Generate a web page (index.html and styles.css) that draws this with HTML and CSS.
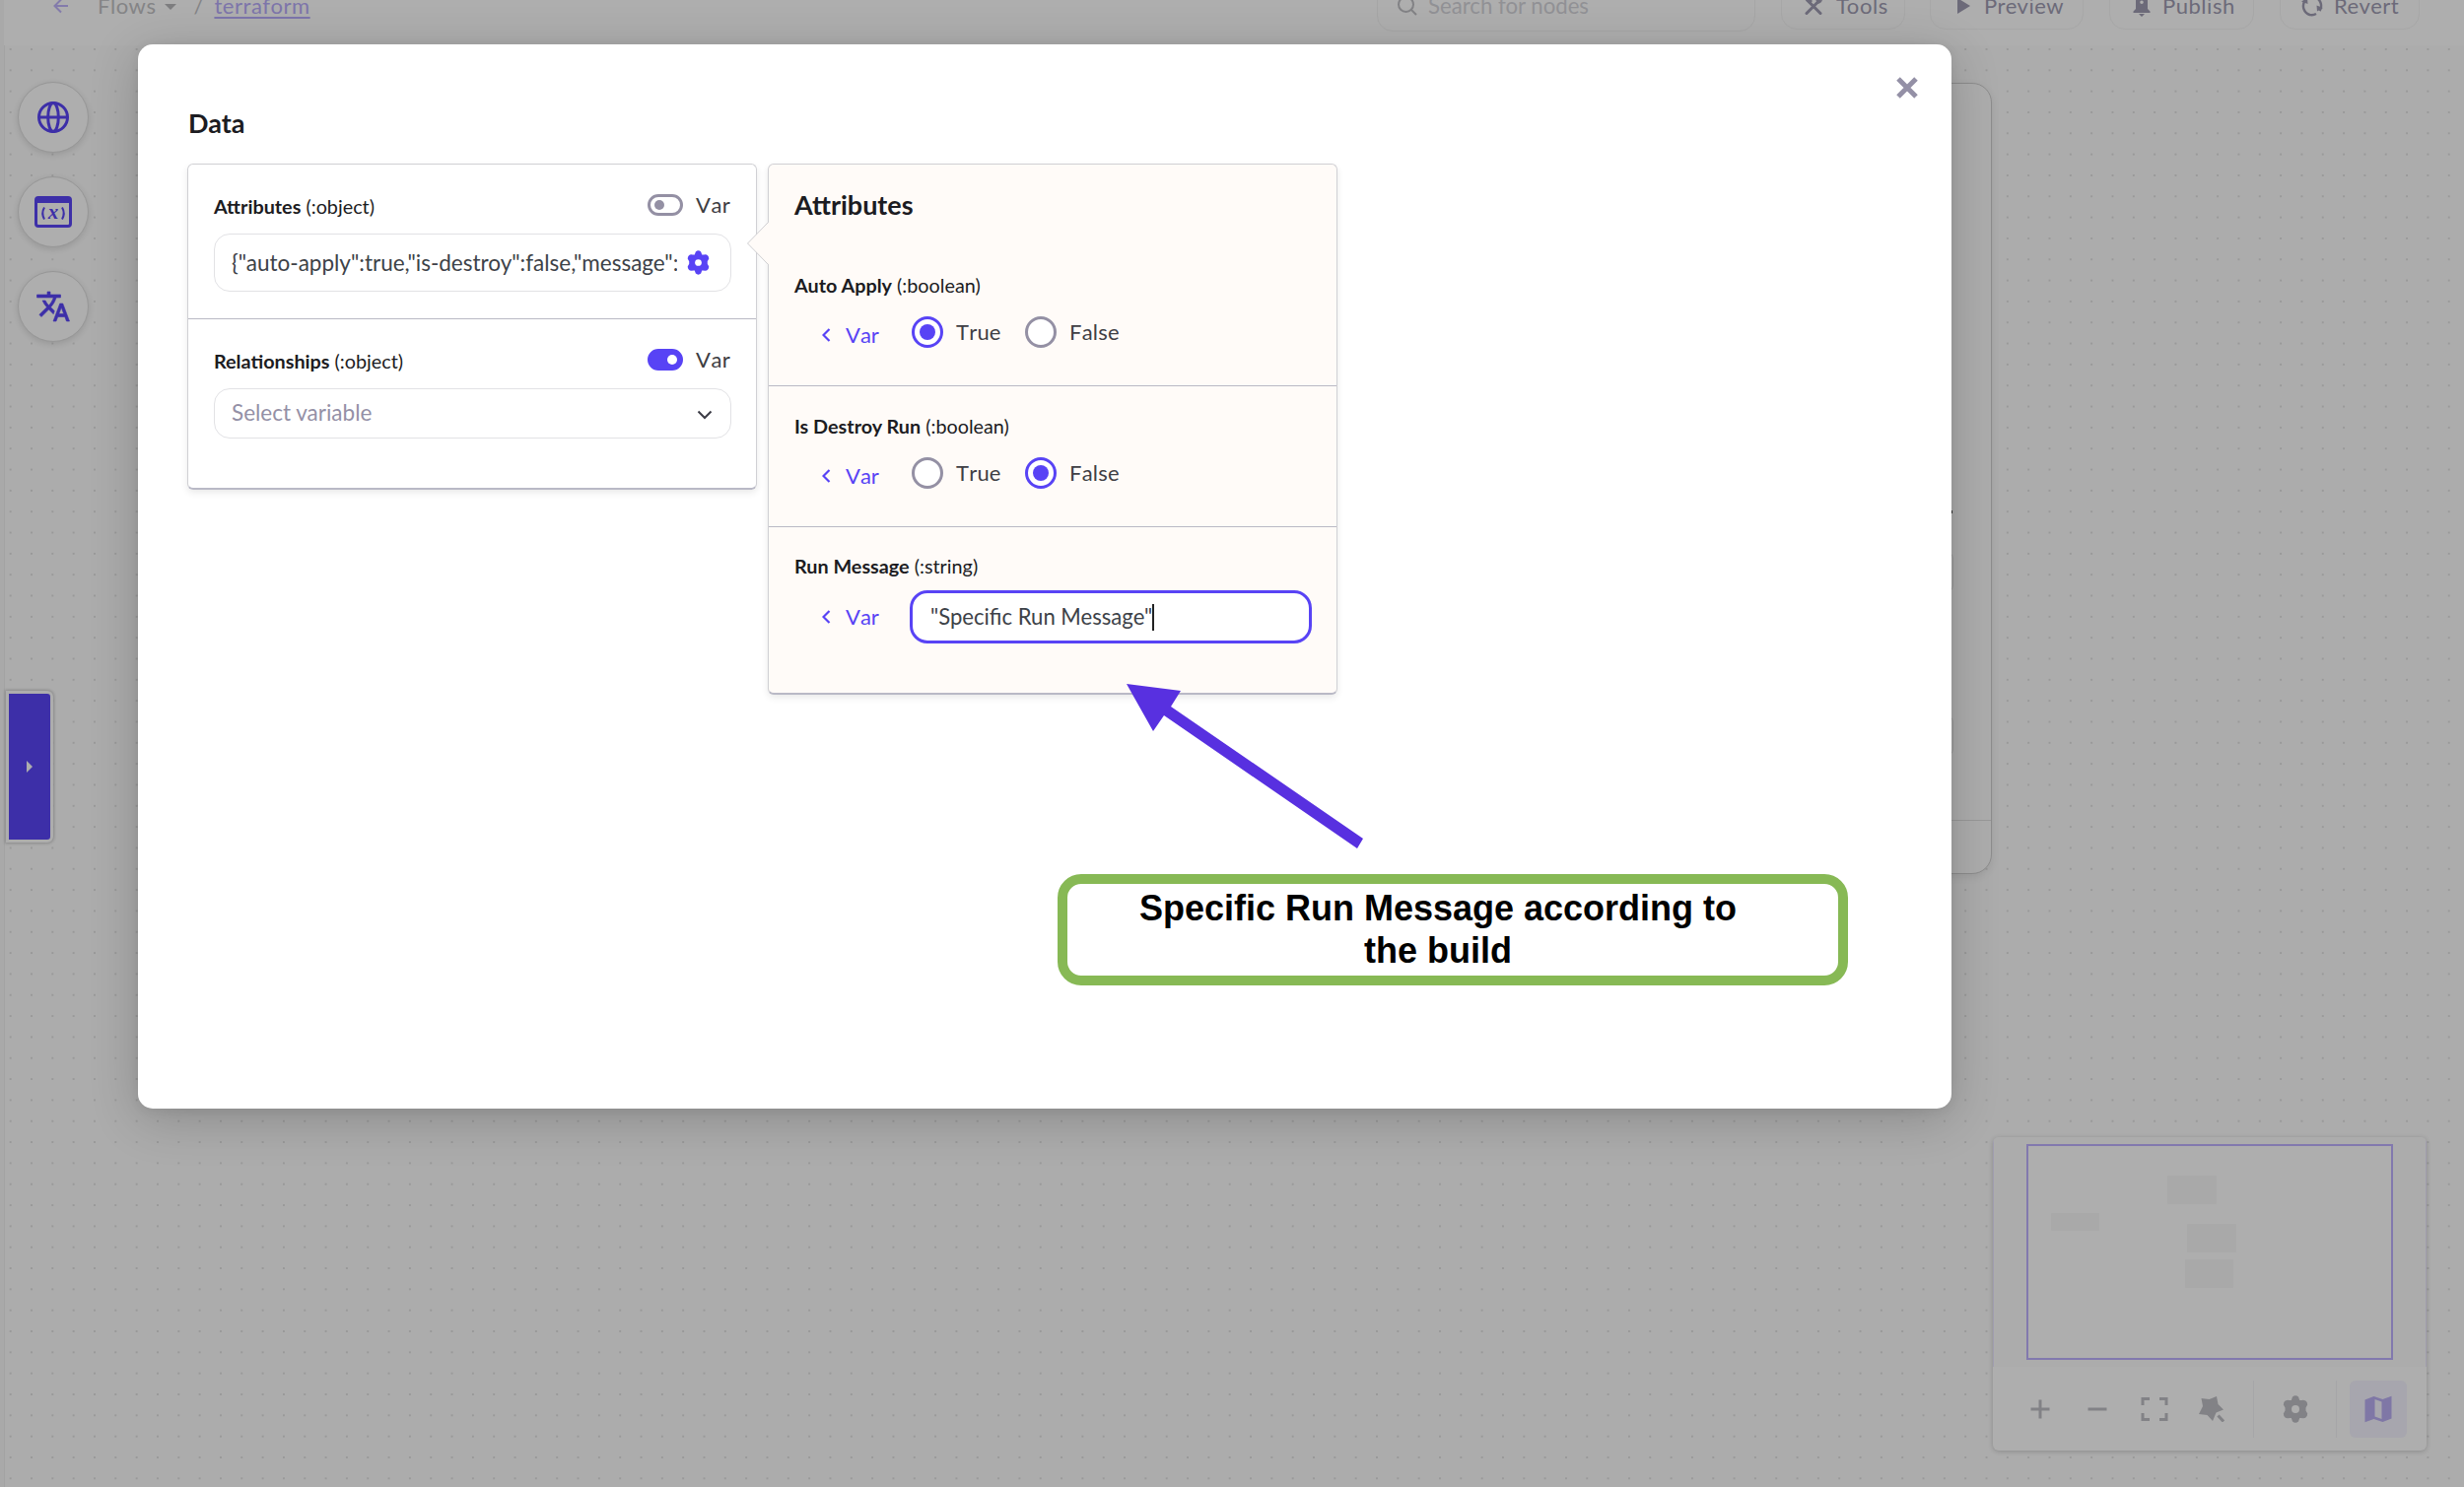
FILE: index.html
```html
<!DOCTYPE html>
<html lang="en">
<head>
<meta charset="utf-8">
<title>Flows / terraform</title>
<link rel="stylesheet" href="styles.css">
</head>
<body>
<div class="app">
  <header class="topbar">
    <nav class="crumbs">
      <svg class="back" width="16" height="16" viewBox="0 0 16 16"><path d="M15 8H1.500M8 1.500L1.500 8L8 14.500"/></svg>
      <span class="crumb-root">Flows</span>
      <svg class="caret" width="12" height="6" viewBox="0 0 12 6"><path d="M0 0h12L6 6z"/></svg>
      <span class="slash">/</span>
      <a class="crumb-link">terraform</a>
    </nav>
    <div class="actions">
      <div class="search">
        <svg width="20" height="20" viewBox="0 0 20 20"><circle cx="8.500" cy="8.500" r="7.500"/><path d="M14 14l5 5"/></svg>
        <span>Search for nodes</span>
      </div>
      <div class="btn btn-tools">
        <svg width="20" height="20" viewBox="0 0 20 20"><path class="ln" d="M3 17.500L16 4.500M17 17.500L4 4.500"/><path d="M0.500 3L4 0l5 5-3 3zM12 3a5 5 0 0 1 6-2l-3 3 1 1.500L19 3a5 5 0 0 1-5 5z"/></svg>
        <span>Tools</span>
      </div>
      <div class="btn btn-preview">
        <svg width="13" height="16" viewBox="0 0 13 16"><path d="M0 0L13 8L0 16z"/></svg>
        <span>Preview</span>
      </div>
      <div class="btn btn-publish">
        <svg width="18" height="22" viewBox="0 0 18 22"><path fill-rule="evenodd" d="M9 0a6 6 0 0 1 6 6v8l2.500 2.500V18H.5v-1.500L3 14V6a6 6 0 0 1 6-6zM9 5.500a1.800 1.800 0 1 0 0 3.600a1.800 1.800 0 0 0 0-3.600zM6 19h6l-3 3z"/></svg>
        <span>Publish</span>
      </div>
      <div class="btn btn-revert">
        <svg width="22" height="22" viewBox="0 0 22 22"><path class="ln thin" d="M8.500 20A9.300 9.300 0 0 1 3.500 6M13.500 2a9.300 9.300 0 0 1 5 14M15 19a9 9 0 0 1-7 .8"/><path d="M0 6.500l6-3.500.5 6zM22 13l-6 3.500-.5-6z"/></svg>
        <span>Revert</span>
      </div>
    </div>
  </header>

  <main class="canvas">
    <div class="node-card"><div class="node-foot"></div></div>
    <i class="node-mark"></i><i class="node-field field-a"></i><i class="node-field field-b"></i>

    <div class="rail">
      <div class="round"><svg width="34" height="34" viewBox="0 0 34 34"><g fill="none" stroke="#3d2fa8" stroke-width="3"><circle cx="17" cy="17" r="14.500"/><ellipse cx="17" cy="17" rx="5.300" ry="14.500"/><path d="M3 17h28"/></g></svg></div>
      <div class="round"><svg width="38" height="34" viewBox="0 0 38 34"><rect x="1.500" y="2.500" width="35" height="29" rx="2.500" fill="none" stroke="#3d2fa8" stroke-width="3"/><path d="M1 3h36v5H1z" fill="#3d2fa8"/><path d="M10 12.500q-3.500 6 0 12M28 12.500q3.500 6 0 12" fill="none" stroke="#3d2fa8" stroke-width="2"/><text x="19" y="23.500" class="var-x">x</text></svg></div>
      <div class="round"><svg width="36" height="36" viewBox="0 0 24 24"><path fill="#3d2fa8" stroke="#3d2fa8" stroke-width=".4" d="M12.870 15.070l-2.540-2.510.03-.03c1.740-1.940 2.980-4.170 3.710-6.530H17V4h-7V2H8v2H1v1.990h11.170C11.500 7.920 10.440 9.750 9 11.350 8.070 10.320 7.300 9.190 6.690 8h-2c.73 1.630 1.730 3.170 2.980 4.560l-5.090 5.020L4 19l5-5 3.110 3.110.76-2.040zM18.500 10h-2L12 22h2l1.120-3h4.750L21 22h2l-4.500-12zm-2.620 7l1.620-4.330L19.120 17h-3.240z"/></svg></div>
    </div>
    <div class="drawer-tab"><svg width="6" height="12" viewBox="0 0 6 12"><path d="M0 0l6 6-6 6z" fill="#adadad"/></svg></div>

    <div class="minimap">
      <div class="map-view">
        <svg width="372" height="219" viewBox="0 0 372 219"><rect x="1" y="1" width="370" height="217" fill="#aeaeae" stroke="#8279ae" stroke-width="2"/><g fill="#a9a9a9"><rect x="143" y="32" width="50" height="29" rx="1"/><rect x="25" y="70" width="49" height="18" rx="1"/><rect x="163" y="81" width="50" height="29" rx="1"/><rect x="161" y="117" width="49" height="29" rx="1"/></g></svg>
      </div>
      <div class="map-tools">
        <div class="tool"><svg width="20" height="20" viewBox="0 0 20 20"><path class="mln" d="M10 .5v19M.5 10h19"/></svg></div>
        <div class="tool"><svg width="20" height="20" viewBox="0 0 20 20"><path class="mln" d="M.5 10h19"/></svg></div>
        <div class="tool"><svg width="28" height="26" viewBox="0 0 28 26"><path class="mln" d="M2 9V2.500H9M19 2.500h7V9M26 17v6.500h-7M9 23.500H2V17"/></svg></div>
        <div class="tool"><svg width="26" height="26" viewBox="0 0 26 26"><path fill="#828286" d="M2.500 2l8 1L18 0l1.500 8 5.500 5.500-7.500 3L14 25l-5.500-6L0 18l4-8z"/><path class="mln" d="M19.500 19.500l5.500 6"/></svg></div>
        <i class="sep"></i>
        <div class="tool"><svg width="26" height="28" viewBox="0 0 26 28"><use href="#gear" fill="#828286"/><circle cx="13" cy="14" r="4" fill="#aeaeae"/></svg></div>
        <i class="sep"></i>
        <div class="tool active"><svg width="28" height="28" viewBox="0 0 28 28"><path fill="#7f77a6" fill-rule="evenodd" d="M.5 4.500L9.500 1l9 3L27.500.7v22.800L18.500 27l-9-3-9 3.300zM10.500 4v17.500l7 2.500V6.500z"/></svg></div>
      </div>
    </div>
  </main>
</div>

<section class="modal">
  <svg class="close" width="22" height="22" viewBox="0 0 22 22"><path d="M2 2l18 18M20 2L2 20"/></svg>
  <h2 class="modal-title">Data</h2>
  <div class="cards">
    <div class="card">
      <div class="field">
        <div class="field-head"><span class="label"><b>Attributes</b> (:object)</span><span class="switch"></span><span class="switch-text">Var</span></div>
        <div class="input"><span class="value">{"auto-apply":true,"is-destroy":false,"message":""}</span>
          <svg class="gear" width="23" height="25" viewBox="0 0 26 28"><defs><path id="gear" d="M10 1.500Q13-1 16 1.500L17.200 5Q19 5.200 20.800 4.700Q25 5 25.200 9.500L23.500 12.500V15.500L25.200 18.500Q25 23 20.800 23.300Q19 22.800 17.200 23L16 26.500Q13 29 10 26.500L8.800 23Q7 22.800 5.200 23.300Q1 23 .8 18.500L2.500 15.500V12.500L.8 9.500Q1 5 5.200 4.700Q7 5.200 8.800 5z"/></defs><use href="#gear" fill="#5843f5"/><circle cx="13" cy="14" r="3.800" fill="#fff"/></svg>
        </div>
      </div>
      <div class="field">
        <div class="field-head"><span class="label"><b>Relationships</b> (:object)</span><span class="switch on"></span><span class="switch-text">Var</span></div>
        <div class="input select"><span class="placeholder">Select variable</span>
          <svg width="16" height="10" viewBox="0 0 16 10"><path d="M1.500 1.500L8 8l6.500-6.500" fill="none" stroke="#3c3c46" stroke-width="2"/></svg>
        </div>
      </div>
    </div>

    <div class="card detail">
      <svg class="pointer" width="24" height="46" viewBox="0 0 24 46"><path d="M23 1.500L1.500 23L23 44.500V1.500" fill="#fffbf8"/><path d="M22.500 1.500L1.500 23L22.500 44.500" fill="none" stroke="#cfcfd2"/></svg>
      <h3 class="detail-title">Attributes</h3>
      <div class="prop">
        <div class="label"><b>Auto Apply</b> (:boolean)</div>
        <div class="choices"><span class="var-link"><svg width="9" height="14" viewBox="0 0 9 14"><path d="M7.500 1L1.500 7l6 6"/></svg>Var</span><span class="radio checked"></span><span class="opt">True</span><span class="radio"></span><span class="opt">False</span></div>
      </div>
      <div class="prop">
        <div class="label"><b>Is Destroy Run</b> (:boolean)</div>
        <div class="choices"><span class="var-link"><svg width="9" height="14" viewBox="0 0 9 14"><path d="M7.500 1L1.500 7l6 6"/></svg>Var</span><span class="radio"></span><span class="opt">True</span><span class="radio checked"></span><span class="opt">False</span></div>
      </div>
      <div class="prop last">
        <div class="label"><b>Run Message</b> (:string)</div>
        <div class="entry"><span class="var-link"><svg width="9" height="14" viewBox="0 0 9 14"><path d="M7.500 1L1.500 7l6 6"/></svg>Var</span><div class="text-input"><span>"Specific Run Message"</span><i class="cursor"></i></div></div>
      </div>
    </div>
  </div>
</section>

<svg class="arrow" width="244" height="170" viewBox="0 0 244 170"><path d="M1 1L56 8L46 24L241 158L235 168L39 33L28 49z" fill="#5830e0"/></svg>
<div class="callout">Specific Run Message according to the build</div>
</body>
</html>
```
FILE: styles.css
```css
* { box-sizing: border-box; }
body { margin: 0; width: 2500px; height: 1509px; overflow: hidden; position: relative; background: #acacac; font-family: Lato, "Liberation Sans", sans-serif; font-size: 22px; line-height: 26px; }
svg { display: block; flex: none; }
h2, h3 { margin: 0; }

.app { height: 1509px; border-left: 4px solid #a9a9a9; box-shadow: inset 1px 0 #a3a3a3; display: flex; flex-direction: column; }
.topbar { height: 80px; margin-top: -34px; padding: 0 45px 0 50px; display: flex; align-items: center; justify-content: space-between; background: #aeaeae; color: #848486; }
.crumbs { display: flex; align-items: center; letter-spacing: .5px; font-kerning: none; }
.back { fill: none; stroke: #837bab; stroke-width: 2; }
.crumb-root { margin-left: 29px; }
.caret { fill: #7d7d7f; margin: 2px 0 0 9px; }
.slash { margin-left: 17px; width: 10px; }
.crumb-link { margin-left: 11px; color: #7d75aa; text-decoration: underline; text-underline-offset: 3px; text-decoration-thickness: 2px; }
.actions { display: flex; align-items: center; color: #6c6a79; }
.search { width: 384px; height: 51px; border: 1px solid #a6a6a6; border-radius: 16px; display: flex; align-items: center; gap: 11px; padding-left: 20px; color: #919195; margin-right: 26px; font-size: 22.200px; }
.search svg { fill: none; stroke: #828285; stroke-width: 2; }
.btn { height: 47px; border: 1px solid #a7a7a7; border-radius: 16px; display: flex; align-items: center; letter-spacing: .55px; }
.btn svg { fill: #6c6a79; }
.btn .ln { fill: none; stroke: #6c6a79; stroke-width: 3; stroke-linecap: round; }
.btn .thin { stroke-width: 2.400; stroke-linecap: butt; }
.btn-tools { width: 126px; padding-left: 22px; gap: 13px; margin-right: 25px; }
.btn-preview { width: 156px; padding-left: 27px; gap: 14px; margin-right: 26px; }
.btn-publish { width: 147px; padding-left: 23px; gap: 12px; margin-right: 26px; }
.btn-revert { width: 142px; padding-left: 21px; gap: 11px; }

.canvas { position: relative; flex: 1; background-image: radial-gradient(circle, #999 0, #999 .7px, transparent 1.3px); background-size: 21.333px 21.333px; background-position: -4px -6.700px; }
.node-card { position: absolute; left: 1500px; top: 38px; width: 517px; height: 803px; border: 1px solid #8d8d8d; border-radius: 20px; box-shadow: 0 3px 8px rgba(0,0,0,.08); background: #adadad; display: flex; flex-direction: column; justify-content: flex-end; }
.node-foot { height: 54px; border-top: 1px solid #999; }
.node-mark { position: absolute; left: 1976px; top: 472px; width: 1px; height: 3px; background: #333; }
.node-field { position: absolute; left: 1960px; width: 18px; border: 1px solid #9c9c9c; border-radius: 8px; }
.field-a { top: 513px; height: 43px; }
.field-b { top: 679px; height: 43px; }
.rail { display: flex; flex-direction: column; gap: 24px; padding: 37px 0 0 14px; width: 90px; }
.round { width: 72px; height: 72px; border: 1px solid #979797; border-radius: 50%; background: #aeaeae; box-shadow: 0 2px 6px rgba(0,0,0,.12); display: flex; align-items: center; justify-content: center; }
.round svg { margin-top: -1px; }
.var-x { font: italic bold 21px "Liberation Serif", serif; text-anchor: middle; fill: #3d2fa8; }
.drawer-tab { position: absolute; left: 2px; top: 655px; width: 48px; height: 154px; border: 3px solid #adadad; border-radius: 0 6px 6px 0; background: #3d2fa8; box-shadow: 0 0 3px 1px rgba(0,0,0,.2); display: flex; align-items: center; justify-content: center; }
.minimap { position: absolute; left: 2018px; top: 1108px; width: 440px; height: 318px; background: #aeaeae; border-radius: 6px; box-shadow: 0 1px 5px rgba(0,0,0,.2); overflow: hidden; }
.map-view { height: 233px; background: #acacac; padding: 7px 33px; border-left: 1px solid #a09dae; border-right: 1px solid #a09dae; }
.map-tools { height: 85px; padding: 0 19px; display: flex; align-items: center; }
.tool { width: 57.900px; height: 58px; display: flex; align-items: center; justify-content: center; flex: none; }
.tool.active { background: #a7a6ae; border-radius: 6px; }
.mln { fill: none; stroke: #828286; stroke-width: 3; }
.sep { width: 1px; height: 58px; background: #a6a6a8; margin: 0 13px; }

.modal { position: absolute; left: 140px; top: 45px; width: 1840px; height: 1080px; background: #fff; border-radius: 15px; box-shadow: 0 10px 50px rgba(0,0,0,.2), 0 2px 12px rgba(0,0,0,.06); padding: 64px 50px 0; color: #1c1c22; }
.close { position: absolute; right: 34px; top: 33px; fill: none; stroke: #9490a6; stroke-width: 5; }
.modal-title { font-size: 27px; line-height: 32px; margin: 0 0 25px 1px; }
.cards { display: flex; gap: 11px; align-items: flex-start; }
.card { width: 578px; border: 1px solid #d0d0d4; border-bottom: 2px solid #b9b9c6; border-radius: 6px; box-shadow: 0 3px 7px rgba(0,0,0,.09); position: relative; height: 331px; }
.field { padding: 30px 25px 0 26px; height: 157px; border-bottom: 1px solid #b9b9c4; }
.field:last-child { border: 0; }
.field-head { height: 22px; display: flex; align-items: center; }
.label { font-size: 19.800px; line-height: 24px; }
.field-head .label { flex: 1; padding-top: 2px; }
.switch { width: 36px; height: 22px; border: 3px solid #9490a4; border-radius: 11px; display: flex; align-items: center; padding-left: 4px; }
.switch::before { content: ""; width: 10px; height: 10px; border-radius: 50%; background: #9490a4; }
.switch.on { background: #5843f5; border-color: #5843f5; padding-left: 17px; }
.switch.on::before { background: #fff; }
.switch-text { width: 36px; margin: -1px 0 0 13px; color: #3d3d42; font-kerning: none; letter-spacing: .5px; white-space: nowrap; }
.input { margin-top: 18px; height: 59px; border: 1px solid #e2e2e5; border-radius: 16px; padding: 0 21px 0 17px; display: flex; align-items: center; justify-content: space-between; color: #3d4248; font-size: 22.500px; }
.value { width: 452px; overflow: hidden; white-space: nowrap; }
.gear { margin-top: -1px; }
.select { height: 51px; padding-right: 18px; }
.placeholder { color: #9490a6; margin-top: -2px; }
.select svg { margin-top: 3px; }

.detail { background: #fffbf8; height: 539px; }
.pointer { position: absolute; left: -23px; top: 57px; }
.detail-title { height: 82px; line-height: 82px; padding-left: 26px; font-size: 27px; }
.prop { height: 143px; padding: 28px 25px 0 26px; border-bottom: 1px solid #b9b9c4; }
.prop.last { border: 0; padding-top: 27px; }
.choices { margin-top: 20px; height: 32px; display: flex; align-items: center; color: #3f3f44; }
.var-link { width: 119px; padding-left: 28px; display: flex; align-items: center; gap: 15px; color: #5843f5; font-kerning: none; }
.choices .var-link { padding-top: 6px; }
.var-link svg { fill: none; stroke: #5843f5; stroke-width: 2.200; }
.radio { width: 32px; height: 32px; border: 3px solid #9490a4; border-radius: 50%; background: #fff; display: flex; align-items: center; justify-content: center; }
.radio.checked { border-color: #5843f5; }
.radio.checked::before { content: ""; width: 16px; height: 16px; border-radius: 50%; background: #5843f5; }
.opt { margin-left: 13px; width: 70px; font-kerning: none; letter-spacing: .2px; }
.entry { margin-top: 13px; display: flex; align-items: center; }
.entry .var-link { width: 117px; }
.text-input { flex: 1; height: 54px; border: 3px solid #5843f5; border-radius: 18px; background: #fff; padding-left: 18px; display: flex; align-items: center; color: #3d4248; font-size: 22.100px; }
.cursor { width: 2px; height: 27px; background: #222; }

.arrow { position: absolute; left: 1142px; top: 693px; }
.callout { position: absolute; left: 1073px; top: 887px; width: 802px; height: 113px; border: 10px solid #87b955; border-radius: 24px; background: #fff; padding: 3px 72px 0 42px; text-align: center; color: #000; font: bold 36px/43px "Liberation Sans", Arial, sans-serif; }
```
